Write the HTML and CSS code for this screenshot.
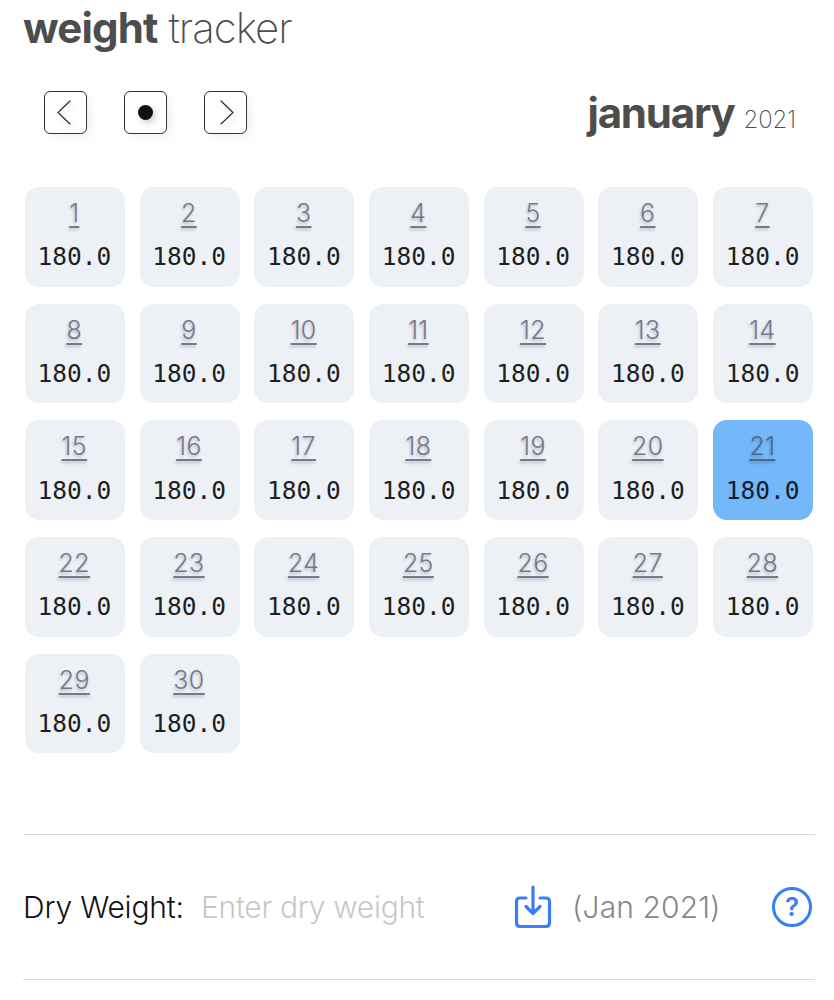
FILE: index.html
```
<!DOCTYPE html>
<html lang="en">
<head>
<meta charset="utf-8">
<title>weight tracker</title>
<link rel="stylesheet" href="styles.css">
</head>
<body>
<main class="app">
  <h1 class="title"><b class="name">weight</b><span class="light">tracker</span></h1>
  <header class="toolbar">
    <nav class="nav">
      <button class="nav-btn" aria-label="Previous month"><svg width="41" height="41" viewBox="0 0 41 41"><path d="M25 9 13 20.5 25 32"/></svg></button>
      <button class="nav-btn" aria-label="Today"><svg width="41" height="41" viewBox="0 0 41 41"><circle class="dot" cx="20.5" cy="20.5" r="7.5"/></svg></button>
      <button class="nav-btn" aria-label="Next month"><svg width="41" height="41" viewBox="0 0 41 41"><path d="M16 9 28 20.5 16 32"/></svg></button>
    </nav>
    <h2 class="period"><b class="month">january</b><span class="year">2021</span></h2>
  </header>
  <section class="days" id="days"></section>
  <footer class="dry">
    <label class="dry-label" for="dry">Dry Weight:</label>
    <input class="dry-input" id="dry" placeholder="Enter dry weight">
    <svg class="save" width="38" height="44" viewBox="0 0 38 44"><path d="M12 13H6Q2.5 13 2.5 16.500V37.500Q2.500 41.500 6 41.500H32Q35.500 41.500 35.500 37.500V16.500Q35.500 13 32 13H26M19 2V28.500M12 21.500 19 28.500 26 21.500"/></svg>
    <span class="stamp">(Jan 2021)</span>
    <span class="help">?</span>
  </footer>
</main>
<script src="script.js"></script>
</body>
</html>
```
FILE: styles.css
```
* { box-sizing: border-box; }
body { margin: 0; background: #fff; font-family: Inter, sans-serif; color: #4d4d4d; }
.app { padding: 0 19px 0 23px; }
.title { display: flex; gap: 11px; height: 58px; margin: 0; font-size: 42px; line-height: 56px; font-weight: 400; white-space: nowrap; }
.name { font-weight: 650; letter-spacing: -0.85px; }
.light { font-weight: 150; letter-spacing: -1px; }
.toolbar { display: flex; justify-content: space-between; height: 76px; margin-top: 33px; padding: 0 19px 0 21px; }
.nav { display: flex; gap: 37px; }
.nav-btn { width: 43px; height: 43px; padding: 0; border: 1px solid #333; border-radius: 6px; background: #fff; box-shadow: 4px 4px 8px rgba(0,0,0,.06); }
.nav-btn svg { display: block; fill: none; stroke: #222; stroke-width: 1.1; stroke-linecap: round; filter: drop-shadow(3px 3px 3px rgba(0,0,0,.18)); }
.nav-btn .dot { fill: #111; stroke: none; }
.period { display: flex; gap: 9px; align-items: baseline; margin: 0; font-size: 42px; line-height: 43px; font-weight: 400; white-space: nowrap; }
.month { font-weight: 650; letter-spacing: -1.2px; }
.year { font-size: 24px; font-weight: 150; letter-spacing: -0.2px; }
.days { display: grid; grid-template-columns: repeat(7, 100px); column-gap: 14.7px; row-gap: 17px; padding: 20px 0 0 2px; }
.day { height: 99.7px; padding-top: 10px; border-radius: 14px; background: #edf1f6; text-align: center; }
.day.today { background: #75b8f9; }
.num { display: block; height: 32px; margin-right: 1.4px; font-size: 25px; line-height: 32px; font-weight: 300; letter-spacing: 0.4px; color: #77778f; text-decoration: underline; text-decoration-thickness: 1.5px; text-underline-offset: 3.5px; text-decoration-skip-ink: none; text-shadow: -1px 2px 3px rgba(0,0,0,.22); }
.today .num { color: #4f6590; }
.value { display: block; margin: 13.4px 1px 0 0; font: 24.5px/30px "DejaVu Sans Mono", monospace; color: #1d1f21; }
.today .value { color: #10202e; }
.dry { display: flex; align-items: center; height: 146px; margin-top: 80.5px; border-top: 1px solid #d9d9d9; border-bottom: 1px solid #d9d9d9; font-size: 30px; font-weight: 300; white-space: nowrap; }
.dry-label { width: 178px; color: #111; font-weight: 300; letter-spacing: -0.2px; }
.dry-input { width: 313px; height: 40px; padding: 0; border: 0; outline: 0; background: none; font: 300 30px Inter, sans-serif; letter-spacing: -0.3px; }
.dry-input::placeholder { color: #c8c8c8; opacity: 1; }
.save { flex: none; fill: none; stroke: #397ffb; stroke-width: 3.2; stroke-linecap: round; stroke-linejoin: round; }
.stamp { margin-left: 20px; color: #888; letter-spacing: 0.1px; }
.help { display: flex; align-items: center; justify-content: center; width: 40px; height: 40px; margin: 0 3px 0 auto; border: 3px solid #397ffb; border-radius: 50%; color: #397ffb; font-size: 26px; font-weight: 600; }
```
FILE: script.js
```
const grid = document.getElementById("days");
for (let d = 1; d <= 30; d++) {
  const cell = document.createElement("div");
  cell.className = d === 21 ? "day today" : "day";
  cell.innerHTML = `<a class="num">${d}</a><span class="value">180.0</span>`;
  grid.append(cell);
}
```
